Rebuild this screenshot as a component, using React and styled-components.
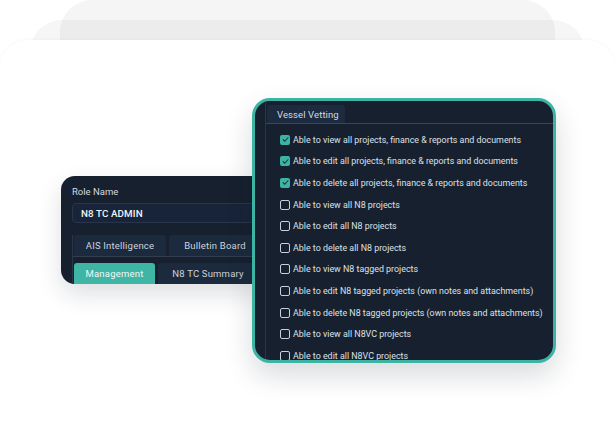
import React from "react"
import styled, { createGlobalStyle } from "styled-components"

const GlobalStyle = createGlobalStyle`
  html, body {
    margin: 0;
    padding: 0;
    background: #ffffff;
    font-family: Roboto, "Liberation Sans", Arial, sans-serif;
    overflow: hidden;
  }
`

const BackCard = styled.div`
  margin: 0 60px;
  padding-top: 20px;
  background: #f5f5f5;
  border-radius: 32px 32px 0 0;
`

const MiddleCard = styled.div`
  margin: 0 -30px;
  padding-top: 20px;
  background: rgba(0, 0, 0, 0.035);
  border-radius: 32px 32px 0 0;
`

const FrontCard = styled.div`
  margin: 0 -30px;
  min-height: 381px;
  box-sizing: border-box;
  padding: 58px 0 0 61px;
  background: #ffffff;
  border-radius: 28px 28px 0 0;
  box-shadow: 0 -1px 3px rgba(0, 0, 0, 0.03);
  display: flex;
  align-items: flex-start;
`

const RolePanel = styled.div`
  width: 205px;
  height: 108px;
  margin-top: 78px;
  margin-right: -14px;
  box-sizing: border-box;
  padding: 10px 0 0 11px;
  background: #17202f;
  border-radius: 14px;
  overflow: hidden;
  box-shadow: 0 10px 24px rgba(15, 25, 40, 0.14);
  display: flex;
  flex-direction: column;
`

const Label = styled.div`
  font-size: 9.5px;
  color: #d3d9e0;
  line-height: 12px;
`

const Input = styled.div`
  margin-top: 5px;
  height: 22px;
  width: 220px;
  box-sizing: border-box;
  padding-left: 8px;
  display: flex;
  align-items: center;
  background: #18243a;
  border: 1px solid #2a3549;
  border-radius: 4px;
  font-size: 9.8px;
  font-weight: 500;
  color: #f1f4f7;
  letter-spacing: 0.1px;
`

const TabBlock = styled.div`
  margin-top: 12px;
  border-left: 1px solid #2b3749;
  display: flex;
  flex-direction: column;
  gap: 6px;
`

const TabRow = styled.div`
  display: flex;
  gap: 3px;
  padding-left: 1px;
  border-bottom: ${({ $line }) => ($line ? "1px solid #323e50" : "none")};
`

const Tab = styled.div`
  flex: none;
  width: ${({ $w }) => $w}px;
  height: 21px;
  display: flex;
  align-items: center;
  justify-content: center;
  border-radius: 3px 3px 0 0;
  font-size: 9.5px;
  letter-spacing: 0.2px;
  background: ${({ $active }) => ($active ? "#3fb5a6" : "#1c2a3e")};
  color: ${({ $active }) => ($active ? "#eef8f6" : "#cdd4dc")};
`

const VettingPanel = styled.div`
  position: relative;
  z-index: 1;
  width: 304px;
  height: 265px;
  box-sizing: border-box;
  border: 3px solid #3db3a4;
  border-radius: 18px;
  background: #17202f;
  overflow: hidden;
  box-shadow: 0 12px 28px rgba(15, 25, 40, 0.16);
  padding-left: 10px;
`

const VettingInner = styled.div`
  height: 100%;
  border-left: 1px solid #2b3749;
  display: flex;
  flex-direction: column;
`

const TabStrip = styled.div`
  padding: 4px 0 0 1px;
  border-bottom: 1px solid #3a4658;
  display: flex;
`

const VesselTab = styled.div`
  width: 78px;
  height: 18px;
  box-sizing: border-box;
  padding-left: 10px;
  display: flex;
  align-items: center;
  background: #1c2b3f;
  border-radius: 3px 3px 0 0;
  font-size: 9.5px;
  color: #d3d9e0;
  letter-spacing: 0.1px;
`

const List = styled.ul`
  list-style: none;
  margin: 0;
  padding: 5px 0 0 14px;
`

const Row = styled.li`
  height: 21.6px;
  display: flex;
  align-items: center;
  gap: 3px;
  font-size: 8.9px;
  color: #dce1e7;
  white-space: nowrap;
`

const Box = styled.span`
  flex: none;
  width: 10px;
  height: 10px;
  box-sizing: border-box;
  border-radius: 2px;
  display: flex;
  align-items: center;
  justify-content: center;
  background: ${({ $on }) => ($on ? "#3db3a4" : "transparent")};
  border: ${({ $on }) => ($on ? "none" : "1.3px solid #c9cfd7")};
`

const permissions = [
  ["Able to view all projects, finance & reports and documents", true],
  ["Able to edit all projects, finance & reports and documents", true],
  ["Able to delete all projects, finance & reports and documents", true],
  ["Able to view all N8 projects", false],
  ["Able to edit all N8 projects", false],
  ["Able to delete all N8 projects", false],
  ["Able to view N8 tagged projects", false],
  ["Able to edit N8 tagged projects (own notes and attachments)", false],
  ["Able to delete N8 tagged projects (own notes and attachments)", false],
  ["Able to view all N8VC projects", false],
  ["Able to edit all N8VC projects", false],
]

const Check = () => (
  <svg width="7" height="7" viewBox="0 0 8 8">
    <path d="M1.3 4.2 L3.2 6 L6.8 2" fill="none" stroke="#17323a" strokeWidth="1.2" strokeLinecap="round" strokeLinejoin="round" />
  </svg>
)

const App = () => {
  return (
    <>
      <GlobalStyle />
      <BackCard>
        <MiddleCard>
          <FrontCard>
            <RolePanel>
              <Label>Role Name</Label>
              <Input>N8 TC ADMIN</Input>
              <TabBlock>
                <TabRow $line>
                  <Tab $w={92}>AIS Intelligence</Tab>
                  <Tab $w={92}>Bulletin Board</Tab>
                </TabRow>
                <TabRow>
                  <Tab $w={81} $active>Management</Tab>
                  <Tab $w={100}>N8 TC Summary</Tab>
                </TabRow>
              </TabBlock>
            </RolePanel>

            <VettingPanel>
              <VettingInner>
                <TabStrip>
                  <VesselTab>Vessel Vetting</VesselTab>
                </TabStrip>
                <List>
                  {permissions.map(([text, on], i) => (
                    <Row key={i}>
                      <Box $on={on}>{on && <Check />}</Box>
                      {text}
                    </Row>
                  ))}
                </List>
              </VettingInner>
            </VettingPanel>
          </FrontCard>
        </MiddleCard>
      </BackCard>
    </>
  )
}

export default App
